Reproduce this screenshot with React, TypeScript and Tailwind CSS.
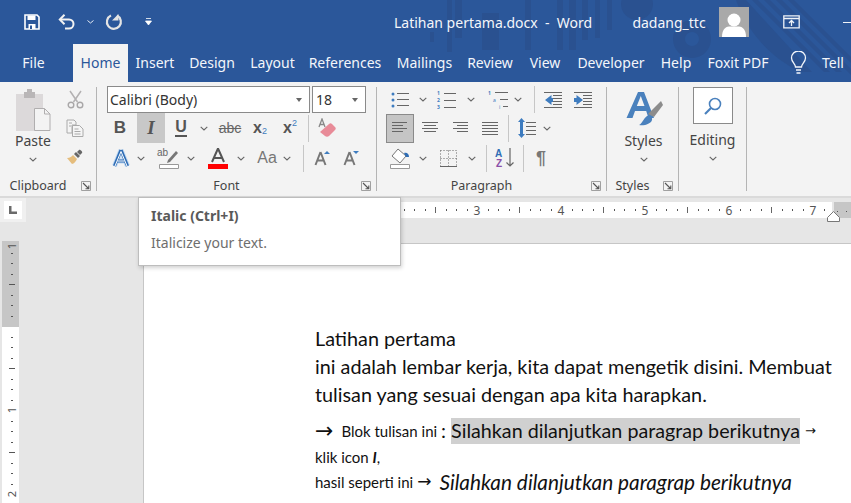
import type { ReactNode } from "react";

const tabs = [
  { label: "File", cls: "w-[67px] mr-[6px] text-[#f3f6fb]" },
  { label: "Home", cls: "w-[55px] bg-[#f3f3f3] text-[#2b579a]" },
  { label: "Insert", cls: "w-[54px] text-[#f3f6fb]" },
  { label: "Design", cls: "w-[60px] text-[#f3f6fb]" },
  { label: "Layout", cls: "w-[61px] text-[#f3f6fb]" },
  { label: "References", cls: "w-[84px] text-[#f3f6fb]" },
  { label: "Mailings", cls: "w-[75px] text-[#f3f6fb]" },
  { label: "Review", cls: "w-[56px] text-[#f3f6fb]" },
  { label: "View", cls: "w-[54px] text-[#f3f6fb]" },
  { label: "Developer", cls: "w-[78px] text-[#f3f6fb]" },
  { label: "Help", cls: "w-[52px] text-[#f3f6fb]" },
  { label: "Foxit PDF", cls: "w-[72px] text-[#f3f6fb]" },
];

function Chevron({ className = "" }: { className?: string }) {
  return (
    <svg width="8" height="5" viewBox="0 0 8 5" className={className}>
      <path d="M.7.8 4 4 7.3.8" fill="none" stroke="#666" strokeWidth="1.1" />
    </svg>
  );
}

function Cell({ className, children }: { className: string; children?: ReactNode }) {
  return <div className={`flex shrink-0 items-center justify-center ${className}`}>{children}</div>;
}

function Sep({ className }: { className: string }) {
  return <div className={`w-px shrink-0 self-center bg-[#c6c6c6] ${className}`} />;
}

function Launcher() {
  return (
    <div className="flex w-[20px] shrink-0 justify-center">
      <svg width="10" height="10" viewBox="0 0 10 10">
        <path d="M.5 9.5v-9h9v9z" fill="none" stroke="#a0a0a0" />
        <path d="M2 2l5.5 5.5M7.8 4.5v3.3H4.5" fill="none" stroke="#555" strokeWidth="1.1" />
      </svg>
    </div>
  );
}

function GroupLabel({ text, launcher = true }: { text: string; launcher?: boolean }) {
  return (
    <div className="mt-[4px] flex h-[18px] items-center text-[12.5px] text-[#444]">
      <span className="flex-1 text-center">{text}</span>
      {launcher && <Launcher />}
    </div>
  );
}

function GroupSep() {
  return <div className="mt-[5px] h-[104px] w-px shrink-0 bg-[#b4b4b4]" />;
}

function Lines({ x, ys, w, color = "#666" }: { x: number; ys: number[]; w: number; color?: string }) {
  return (
    <>
      {ys.map((y) => (
        <path key={y} d={`M${x} ${y}h${w}`} stroke={color} strokeWidth="1" />
      ))}
    </>
  );
}

function Align({ rows }: { rows: [number, number][] }) {
  return (
    <svg width="18" height="15" viewBox="0 0 18 15">
      {rows.map(([x, w], i) => (
        <path key={i} d={`M${x} ${1.5 + i * 3}h${w}`} stroke="#666" />
      ))}
    </svg>
  );
}

function TopRuler() {
  const ticks = [];
  for (let i = -24; i < 40; i++) {
    const x = 477 + i * 10.5 - 143;
    if (x > 689) break;
    const k = ((i % 8) + 8) % 8;
    if (k === 0) continue;
    ticks.push(
      k === 4 ? (
        <path key={i} d={`M${Math.round(x)}.5 5v6`} stroke="#666" />
      ) : (
        <path key={i} d={`M${Math.round(x)}.5 7v2`} stroke="#555" />
      ),
    );
  }
  return (
    <svg width="708" height="16" viewBox="0 0 708 16" className="block">
      <rect x="82" width="607" height="16" fill="#fff" />
      <rect x="691" width="17" height="16" fill="#c6c6c6" />
      {ticks}
      {[3, 4, 5, 6, 7].map((n) => (
        <text key={n} x={334 + (n - 3) * 84} y="12.5" textAnchor="middle" fontSize="12" fill="#555">
          {n}
        </text>
      ))}
      <path d="M694 9.5h1M703 9.5h1" stroke="#555" />
    </svg>
  );
}

function SideRuler() {
  const marks = [];
  for (let i = 0; i < 25; i++) {
    const y = Math.round(1 + i * 10.5);
    if (i % 8 === 0) continue;
    marks.push(
      i % 4 === 0 ? (
        <path key={i} d={`M7 ${y}.5h6`} stroke="#555" />
      ) : (
        <path key={i} d={`M9 ${y}.5h2`} stroke="#555" />
      ),
    );
  }
  return (
    <svg width="17" height="262" viewBox="0 0 17 262" className="ml-[2px] block">
      <rect width="17" height="262" fill="#fff" />
      <rect width="17" height="86" fill="#c6c6c6" />
      {marks}
      <text transform="translate(14 5) rotate(-90)" textAnchor="middle" fontSize="11" fill="#555">1</text>
      <text transform="translate(14 169) rotate(-90)" textAnchor="middle" fontSize="11" fill="#555">1</text>
      <text transform="translate(14 253) rotate(-90)" textAnchor="middle" fontSize="11" fill="#555">2</text>
    </svg>
  );
}

function TitlePattern() {
  return (
    <svg width="851" height="82" viewBox="0 0 851 82" className="absolute left-0 top-0">
      <g fill="#2a5190">
        <path d="M430 32h4v10h-4zM447 0h5v52h-5zM455 0h7v38h-7zM482 13h17v37h-17zM525 0h6v50h-6zM557 0h6v50h-6zM569 0h7v50h-7zM582 0h6v40h-6zM595 0h5v38h-5zM607 0h5v30h-5z" />
        <circle cx="637" cy="4" r="16" />
        <path fillRule="evenodd" d="M692 20a19 19 0 1 0 .01 0zM692 32a7 7 0 1 1-.01 0z" />
        <path d="M736 0h10l66 72h-12c-28-14-52-38-64-72z" />
        <path d="M752 0h6l72 72h-6zM764 0h6l72 72h-6zM776 0h6l69 69v6zM788 0h6l57 57v6z" />
      </g>
    </svg>
  );
}

function AccentA() {
  return (
    <svg width="20" height="22" viewBox="0 0 20 22">
      <path d="M10 3 3.500 19M10 3l6.500 16M6 14h8" fill="none" stroke="#c3daf2" strokeWidth="5" strokeLinejoin="round" />
      <path d="M10 3 3.500 19M10 3l6.500 16M6 14h8" fill="none" stroke="#2f6db5" strokeWidth="3.200" strokeLinejoin="round" />
      <path d="M10 4.500 4 19M10 4.500 16 19M6.500 14h7" fill="none" stroke="#fff" strokeWidth="1" />
    </svg>
  );
}

function GrowA({ down }: { down?: boolean }) {
  return (
    <svg width="20" height="20" viewBox="0 0 20 20">
      <path d="M7.500 4 2.500 17M7.500 4l5 13M4.500 12.500h6" fill="none" stroke="#777" strokeWidth="2" />
      <path d={down ? "M11 3h6l-3 3z" : "M11 6h6l-3-3z"} fill="#3e7cbf" />
    </svg>
  );
}

export default function App() {
  return (
    <div className="flex h-[503px] w-[851px] flex-col overflow-hidden bg-[#e6e6e6] font-['Noto_Sans',sans-serif]">
      <header className="relative h-[82px] shrink-0 bg-[#2b579a]">
        <TitlePattern />
        <div className="relative flex h-[44px] items-center text-[#f4f6fa]">
          <div className="ml-[24px] flex w-[16px] justify-center">
            <svg width="16" height="16" viewBox="0 0 16 16">
              <path d="M1 1h12l2 2v12H1z" fill="none" stroke="#fff" strokeWidth="1.600" />
              <path d="M3.500 1.500h8V6h-8z" fill="#fff" />
              <path d="M4.500 10h7v5h-7z" fill="#fff" />
              <path d="M6 11.500h2V15H6z" fill="#2b579a" />
            </svg>
          </div>
          <div className="ml-[18px]">
            <svg width="18" height="17" viewBox="0 0 18 17" className="block">
              <path d="M2 5.500h9a4.500 4.500 0 0 1 0 9H7" fill="none" stroke="#f2f2f2" strokeWidth="2" />
              <path d="M6.500.8 1.800 5.500l4.700 4.700" fill="none" stroke="#f2f2f2" strokeWidth="2" />
            </svg>
          </div>
          <svg width="7" height="4" viewBox="0 0 7 4" className="ml-[11px]">
            <path d="M.5.500 3.500 3l3-2.500" fill="none" stroke="#e8edf5" />
          </svg>
          <div className="ml-[11px]">
            <svg width="18" height="18" viewBox="0 0 18 18" className="block">
              <path d="M6 2.500a7 7 0 1 0 6 .1" fill="none" stroke="#e4e4e4" strokeWidth="2.200" />
              <path d="M13.500 1v6.500H7z" fill="#e4e4e4" />
            </svg>
          </div>
          <svg width="7" height="8" viewBox="0 0 7 8" className="ml-[22px]">
            <path d="M1 .5h5M.5 3h6L3.500 7z" fill="#fff" stroke="#fff" strokeWidth=".8" />
          </svg>
          <span className="ml-[242px] w-[200px] whitespace-pre text-[14px]">Latihan pertama.docx  -  Word</span>
          <span className="ml-[39px] w-[87px] whitespace-nowrap text-[14px]">dadang_ttc</span>
          <div className="flex h-[30px] w-[30px] items-end justify-center overflow-hidden bg-[#a9a9a9]">
            <svg width="26" height="26" viewBox="0 0 26 26">
              <circle cx="13" cy="9" r="6.500" fill="#fff" />
              <path d="M1 26c0-7 3-10 7-10.500h10c4 .5 7 3.500 7 10.500z" fill="#fff" />
            </svg>
          </div>
          <div className="ml-[34px]">
            <svg width="17" height="14" viewBox="0 0 17 14" className="block">
              <path d="M.8.800h15.400v12H.8zM1 3.500h15" fill="none" stroke="#f0f3f8" strokeWidth="1.300" />
              <path d="M8.500 11V6M6 8l2.500-2.500L11 8" fill="none" stroke="#f0f3f8" strokeWidth="1.300" />
            </svg>
          </div>
          <div className="ml-[43px] h-px w-[8px] bg-[#f0f3f8]" />
        </div>
        <nav className="relative flex h-[38px] text-[14px]">
          {tabs.map((t) => (
            <div key={t.label} className={`flex items-center justify-center whitespace-nowrap pb-[1px] ${t.cls}`}>
              {t.label}
            </div>
          ))}
          <div className="flex w-[48px] items-center justify-center">
            <svg width="17" height="25" viewBox="0 0 17 25">
              <path d="M5.500 16c0-3-4-5-4-9a7 7 0 0 1 14 0c0 4-4 6-4 9z" fill="none" stroke="#f3f6fb" strokeWidth="1.300" />
              <path d="M6 19h5M6.500 22h4" stroke="#f3f6fb" strokeWidth="1.500" />
            </svg>
          </div>
          <div className="flex items-center pb-[1px] text-[#f3f6fb]">Tell</div>
        </nav>
      </header>

      <section className="flex h-[114px] shrink-0 bg-[#f3f3f3] text-[#444]">
        {/* Clipboard */}
        <div className="flex w-[96px] shrink-0 flex-col">
          <div className="flex h-[91px]">
            <div className="flex w-[66px] flex-col items-center pt-[7px]">
              <svg width="36" height="42" viewBox="0 0 36 42">
                <path d="M1 5h27v37H1z" fill="#dcd9da" />
                <path d="M9 3h11v6H9z" fill="#b9b6b7" />
                <path d="M12 0h5v4h-5z" fill="#b9b6b7" />
                <path d="M19.500 19.500h10l5.500 5.500v16.500H19.500z" fill="#f3f3f3" stroke="#b0aeaf" />
                <path d="M29.500 19.500V25H35" fill="none" stroke="#b0aeaf" />
              </svg>
              <span className="text-[14px] leading-[20px]">Paste</span>
              <Chevron className="mt-[6px]" />
            </div>
            <div className="flex w-[18px] flex-col items-center">
              <Cell className="mt-[4px] h-[27px] w-[18px]">
                <svg width="17" height="19" viewBox="0 0 17 19">
                  <path d="M3 1l7.500 11M14 1 6.500 12" stroke="#b3b1b2" strokeWidth="1.500" />
                  <circle cx="4" cy="15" r="2.800" fill="none" stroke="#a9a7a8" strokeWidth="1.400" />
                  <circle cx="13" cy="15" r="2.800" fill="none" stroke="#a9a7a8" strokeWidth="1.400" />
                </svg>
              </Cell>
              <Cell className="h-[29px] w-[18px]">
                <svg width="18" height="18" viewBox="0 0 18 18">
                  <path d="M1 1h7l2 2v3H6v8H1z" fill="#f5f5f5" stroke="#aaa" />
                  <path d="M6.500 6.500h7l3.500 3.500v7.500H6.500z" fill="#f5f5f5" stroke="#aaa" />
                  <path d="M3 4h3M3 7h2M8.500 10h4M8.500 12.500h6M8.500 15h6" stroke="#aaa" />
                </svg>
              </Cell>
              <Cell className="h-[29px] w-[18px]">
                <svg width="18" height="16" viewBox="0 0 18 16">
                  <path d="M1 9c3 0 5-2 6-3l4 4c-1 2-3 5-5 5z" fill="#e5bd7d" />
                  <path d="M8 5l4 4 2-2-4-4z" fill="#666" />
                  <path d="M11 3l2-2c1-1 4 2 3 3l-2 2z" fill="#666" />
                </svg>
              </Cell>
            </div>
          </div>
          <GroupLabel text="Clipboard" />
        </div>
        <GroupSep />

        {/* Font */}
        <div className="flex w-[279px] shrink-0 flex-col pt-[4px]">
          <div className="ml-[10px] flex h-[27px] gap-[2px]">
            <div className="flex w-[203px] items-center justify-between border border-[#8a8a8a] bg-white pl-[2px] pr-[7px] text-[14px] text-[#333]">
              <span>Calibri (Body)</span>
              <span className="h-0 w-0 border-x-[3.500px] border-t-[4px] border-x-transparent border-t-[#666]" />
            </div>
            <div className="flex w-[54px] items-center justify-between border border-[#8a8a8a] bg-white pl-[3px] pr-[7px] text-[14px] text-[#333]">
              <span>18</span>
              <span className="h-0 w-0 border-x-[3.500px] border-t-[4px] border-x-transparent border-t-[#666]" />
            </div>
          </div>
          <div className="ml-[10px] flex h-[30px]">
            <Cell className="mr-[4px] w-[26px] font-['Liberation_Sans',sans-serif] text-[17px] font-bold text-[#555]">B</Cell>
            <Cell className="w-[28px] bg-[#c8c8c8] font-['Liberation_Serif',serif] text-[19px] font-bold italic text-[#555]">I</Cell>
            <Cell className="ml-[2px] w-[28px]">
              <span className="border-b-2 border-[#555] font-['Liberation_Sans',sans-serif] text-[16px] font-bold leading-[16px] text-[#555]">U</span>
            </Cell>
            <Cell className="w-[18px]"><Chevron /></Cell>
            <Cell className="relative w-[34px] font-['Liberation_Sans',sans-serif] text-[14px] text-[#666] line-through">abc</Cell>
            <Cell className="w-[26px] font-['Liberation_Sans',sans-serif] text-[16px] font-bold text-[#555]">
              x<span className="mt-[7px] text-[9px] font-normal text-[#3e7cbf]">2</span>
            </Cell>
            <Cell className="w-[34px] font-['Liberation_Sans',sans-serif] text-[16px] font-bold text-[#555]">
              x<span className="mb-[8px] text-[9px] font-normal text-[#3e7cbf]">2</span>
            </Cell>
            <Sep className="ml-[1px] h-[27px]" />
            <Cell className="w-[36px]">
              <svg width="20" height="20" viewBox="0 0 20 20">
                <path d="M2 9 5 1l3 8M3 6.500h4" fill="none" stroke="#888" strokeWidth="1.300" />
                <path d="M3 14l9-8c1-1 2-1 3 0l3 3c1 1 1 2 0 3l-6 6c-1 1-3 1-4 0z" fill="#e88b98" />
              </svg>
            </Cell>
          </div>
          <div className="ml-[10px] flex h-[30px]">
            <Cell className="w-[28px]"><AccentA /></Cell>
            <Cell className="w-[12px]"><Chevron /></Cell>
            <Cell className="ml-[6px] w-[32px]">
              <svg width="22" height="22" viewBox="0 0 22 22" className="overflow-visible">
                <text x="-1" y="9" fontSize="10" fill="#666" fontFamily="Liberation Sans">ab</text>
                <path d="M10 13 18 4l2 2-8 9-3 1z" fill="#777" />
                <path d="M1.500 17.500h19v4h-19z" fill="#fff" stroke="#999" />
              </svg>
            </Cell>
            <Cell className="w-[12px]"><Chevron /></Cell>
            <Cell className="ml-[5px] w-[32px]">
              <svg width="20" height="22" viewBox="0 0 20 22">
                <path d="M10 1.500 4 15M10 1.500 16 15M6 11h8" fill="none" stroke="#555" strokeWidth="2" />
                <path d="M0 17h20v5H0z" fill="#f00" />
              </svg>
            </Cell>
            <Cell className="ml-[1px] w-[12px]"><Chevron /></Cell>
            <Cell className="ml-[6px] w-[28px] font-['Liberation_Sans',sans-serif] text-[16px] text-[#777]">Aa</Cell>
            <Cell className="w-[12px]"><Chevron /></Cell>
            <Sep className="ml-[10px] h-[27px]" />
            <Cell className="w-[38px]"><GrowA /></Cell>
            <Cell className="w-[20px]"><GrowA down /></Cell>
          </div>
          <GroupLabel text="Font" />
        </div>
        <GroupSep />

        {/* Paragraph */}
        <div className="flex w-[229px] shrink-0 flex-col pt-[4px]">
          <div className="ml-[9px] flex h-[27px]">
            <Cell className="w-[28px]">
              <svg width="18" height="16" viewBox="0 0 18 16">
                <circle cx="2" cy="2" r="1.500" fill="#3e7cbf" />
                <circle cx="2" cy="8" r="1.500" fill="#3e7cbf" />
                <circle cx="2" cy="14" r="1.500" fill="#3e7cbf" />
                <Lines x={6} ys={[1.5, 7.5, 13.5]} w={12} />
              </svg>
            </Cell>
            <Cell className="ml-[3px] w-[12px]"><Chevron /></Cell>
            <Cell className="ml-[4px] w-[28px]">
              <svg width="20" height="20" viewBox="0 0 20 20">
                <text x="0" y="5" fontSize="5" fontWeight="700" fill="#3e7cbf">1</text>
                <text x="0" y="12" fontSize="5" fontWeight="700" fill="#3e7cbf">2</text>
                <text x="0" y="19" fontSize="5" fontWeight="700" fill="#3e7cbf">3</text>
                <Lines x={7} ys={[3.5, 10.5, 17.5]} w={12} />
              </svg>
            </Cell>
            <Cell className="ml-[4px] w-[12px]"><Chevron /></Cell>
            <Cell className="ml-[7px] w-[28px]">
              <svg width="22" height="20" viewBox="0 0 22 20">
                <text x="1" y="5" fontSize="5" fontWeight="700" fill="#3e7cbf">1</text>
                <text x="6" y="12" fontSize="5" fill="#3e7cbf">a</text>
                <text x="12" y="19" fontSize="5" fill="#3e7cbf">i</text>
                <Lines x={8} ys={[2.5]} w={13} />
                <Lines x={13} ys={[9.5]} w={8} />
                <Lines x={16} ys={[16.5]} w={5} />
              </svg>
            </Cell>
            <Cell className="w-[12px]"><Chevron /></Cell>
            <Sep className="ml-[10px] h-[27px]" />
            <Cell className="w-[36px]">
              <svg width="18" height="16" viewBox="0 0 18 16">
                <Lines x={0} ys={[.5, 15.5]} w={18} />
                <Lines x={9} ys={[3.5, 6.5, 9.5, 12.5]} w={9} />
                <path d="M7.500 3 1 8l6.500 5V10H9V6H7.500z" fill="#3e7cbf" />
              </svg>
            </Cell>
            <Cell className="w-[24px]">
              <svg width="18" height="16" viewBox="0 0 18 16">
                <Lines x={0} ys={[.5, 15.5]} w={18} />
                <Lines x={9} ys={[3.5, 6.5, 9.5, 12.5]} w={9} />
                <path d="M2.500 3 9 8l-6.500 5V10H0V6h2.500z" fill="#3e7cbf" />
              </svg>
            </Cell>
          </div>
          <div className="ml-[9px] flex h-[30px] items-center">
            <Cell className="h-[29px] w-[28px] border border-[#8a8a8a] bg-[#c5c5c5]">
              <Align rows={[[1, 15], [1, 11], [1, 15], [1, 11]]} />
            </Cell>
            <Cell className="ml-[2px] w-[28px]">
              <Align rows={[[1, 16], [3, 12], [1, 16], [3, 12]]} />
            </Cell>
            <Cell className="ml-[2px] w-[28px]">
              <Align rows={[[2, 15], [6, 11], [2, 15], [6, 11]]} />
            </Cell>
            <Cell className="ml-[2px] w-[28px]">
              <Align rows={[[1, 16], [1, 16], [1, 16], [1, 16], [1, 16]]} />
            </Cell>
            <Sep className="ml-[4px] h-[27px]" />
            <Cell className="ml-[4px] w-[28px]">
              <svg width="18" height="20" viewBox="0 0 18 20">
                <path d="M3.500 0 7 4H5v12h2l-3.500 4L0 16h2V4H0z" fill="#3e7cbf" />
                <Lines x={8} ys={[4.5, 8.5, 12.5, 16.500]} w={10} />
              </svg>
            </Cell>
            <Cell className="w-[12px]"><Chevron /></Cell>
          </div>
          <div className="ml-[9px] flex h-[30px]">
            <Cell className="w-[28px]">
              <svg width="20" height="21" viewBox="0 0 20 21">
                <path d="M8 1l8 7-6 7-8-7z" fill="#fff" stroke="#777" />
                <path d="M14 5c3-1 5 1 5 4h-3z" fill="#2f6db5" />
                <path d="M.5 16.500h19v4H.5z" fill="#fff" stroke="#999" />
              </svg>
            </Cell>
            <Cell className="ml-[3px] w-[12px]"><Chevron /></Cell>
            <Cell className="ml-[5px] w-[28px]">
              <svg width="17" height="17" viewBox="0 0 17 17">
                <path d="M.5.500h16v16H.5zM8.500.500v16M.5 8.500h16" fill="none" stroke="#666" strokeDasharray="1 2" />
                <path d="M0 16.500h17" stroke="#666" />
              </svg>
            </Cell>
            <Cell className="ml-[4px] w-[12px]"><Chevron /></Cell>
            <Sep className="ml-[8px] h-[27px]" />
            <Cell className="ml-[4px] w-[28px]">
              <svg width="20" height="24" viewBox="0 0 20 24">
                <text x="0" y="11" fontSize="10" fontWeight="700" fill="#2f6db5" fontFamily="Liberation Sans">A</text>
                <text x="1" y="21" fontSize="10" fontWeight="700" fill="#8a4fa8" fontFamily="Liberation Sans">Z</text>
                <path d="M15 2v18M11.500 16.500 15 20l3.500-3.500" fill="none" stroke="#666" strokeWidth="1.200" />
              </svg>
            </Cell>
            <Sep className="ml-[4px] h-[27px]" />
            <Cell className="ml-[3px] w-[28px] font-['Liberation_Sans',sans-serif] text-[18px] font-bold text-[#777]">¶</Cell>
          </div>
          <GroupLabel text="Paragraph" />
        </div>
        <GroupSep />

        {/* Styles */}
        <div className="flex w-[71px] shrink-0 flex-col">
          <div className="flex h-[91px] flex-col items-center pt-[10px]">
            <svg width="38" height="34" viewBox="0 0 38 34" className="ml-[2px]">
              <path d="M13 0h6l10 26h-5.500l-2.300-7H10l-2.500 7H1.500zM11.800 14h7.700L15.800 4z" fill="#4a81bd" fillRule="evenodd" />
              <path d="M23 22l13-13 2 4-9 12z" fill="#8c8c8c" />
              <path d="M14 33c3-1 4-6 8-9 2-1 6 1 5 4-1 4-8 6-13 5z" fill="#4a81bd" />
            </svg>
            <span className="ml-[2px] mt-[5px] text-[14px] leading-[20px]">Styles</span>
            <Chevron className="ml-[2px] mt-[6px]" />
          </div>
          <GroupLabel text="Styles" />
        </div>
        <GroupSep />

        {/* Editing */}
        <div className="flex w-[67px] shrink-0 flex-col items-center pt-[5px]">
          <div className="flex h-[37px] w-[40px] items-center justify-center border border-[#8a8a8a] bg-white">
            <svg width="20" height="20" viewBox="0 0 20 20">
              <circle cx="12" cy="8" r="5.500" fill="none" stroke="#4a81bd" strokeWidth="1.600" />
              <path d="M8 12l-6 6" stroke="#4a81bd" strokeWidth="2.200" />
            </svg>
          </div>
          <span className="mt-[6px] text-[14px] leading-[20px]">Editing</span>
          <Chevron className="mt-[6px]" />
        </div>
        <GroupSep />
      </section>

      <main className="relative flex min-h-0 flex-1 border-t-2 border-[#dadada]">
        <aside className="w-[143px] shrink-0">
          <div className="flex h-[24px] w-[26px] items-center justify-center bg-[#f0f0f0]">
            <div className="flex h-[18px] w-[18px] items-center justify-center bg-white">
              <svg width="8" height="8" viewBox="0 0 8 8">
                <path d="M0 0h2.500v5.500H8V8H0z" fill="#6a6a6a" />
              </svg>
            </div>
          </div>
          <div className="h-[19px]" />
          <SideRuler />
        </aside>
        <div className="flex min-w-0 flex-1 flex-col">
          <div className="relative h-[45px] shrink-0 pt-[4px]">
            <TopRuler />
            <svg width="13" height="11" viewBox="0 0 13 11" className="absolute left-[684px] top-[13px]">
              <path d="M.5 10.500v-4L6.500.5l6 6v4z" fill="#fff" stroke="#777" />
            </svg>
          </div>
          <article className="flex-1 border-l border-t border-[#c6c6c6] bg-white pl-[171px] pt-[80px] font-['Lato',sans-serif] text-[#111]">
            <p className="h-[28px] whitespace-nowrap text-[19.8px] leading-[28px]">Latihan pertama</p>
            <p className="h-[28px] whitespace-nowrap text-[19.8px] leading-[28px]">ini adalah lembar kerja, kita dapat mengetik disini. Membuat</p>
            <p className="h-[28px] whitespace-nowrap text-[19.8px] leading-[28px]">tulisan yang sesuai dengan apa kita harapkan.</p>
            <p className="mt-[10px] flex h-[26px] items-center whitespace-pre">
              <span className="font-['DejaVu_Sans',sans-serif] text-[22px] leading-[26px]">→</span>
              <span className="ml-[8px] text-[15px]">Blok tulisan ini</span>
              <span className="ml-[4px] w-[10px] text-[19.8px]">:</span>
              <span className="bg-[#d0d0d0] text-[19.7px] leading-[26px]">Silahkan dilanjutkan paragrap berikutnya</span>
              <span className="ml-[5px] font-['DejaVu_Sans',sans-serif] text-[13px]">→</span>
            </p>
            <p className="mt-[2px] h-[22px] whitespace-nowrap text-[15px] leading-[22px]">
              klik icon <b className="italic">I</b>,
            </p>
            <p className="mt-[1px] flex h-[26px] items-center whitespace-pre">
              <span className="text-[15px]">hasil seperti ini</span>
              <span className="ml-[4px] font-['DejaVu_Sans',sans-serif] text-[17px]">→</span>
              <span className="ml-[8px] text-[20.8px] italic">Silahkan dilanjutkan paragrap berikutnya</span>
            </p>
          </article>
        </div>
        <div className="absolute left-[138px] top-[-1px] flex h-[69px] w-[263px] flex-col border border-[#bdbdbd] bg-white pl-[12px] shadow-[1px_2px_4px_rgba(0,0,0,0.18)]">
          <span className="mt-[8px] text-[14px] font-bold leading-[20px] text-[#5a5a5a]">Italic (Ctrl+I)</span>
          <span className="mt-[7px] text-[14px] leading-[20px] text-[#6e6e6e]">Italicize your text.</span>
        </div>
      </main>
    </div>
  );
}
